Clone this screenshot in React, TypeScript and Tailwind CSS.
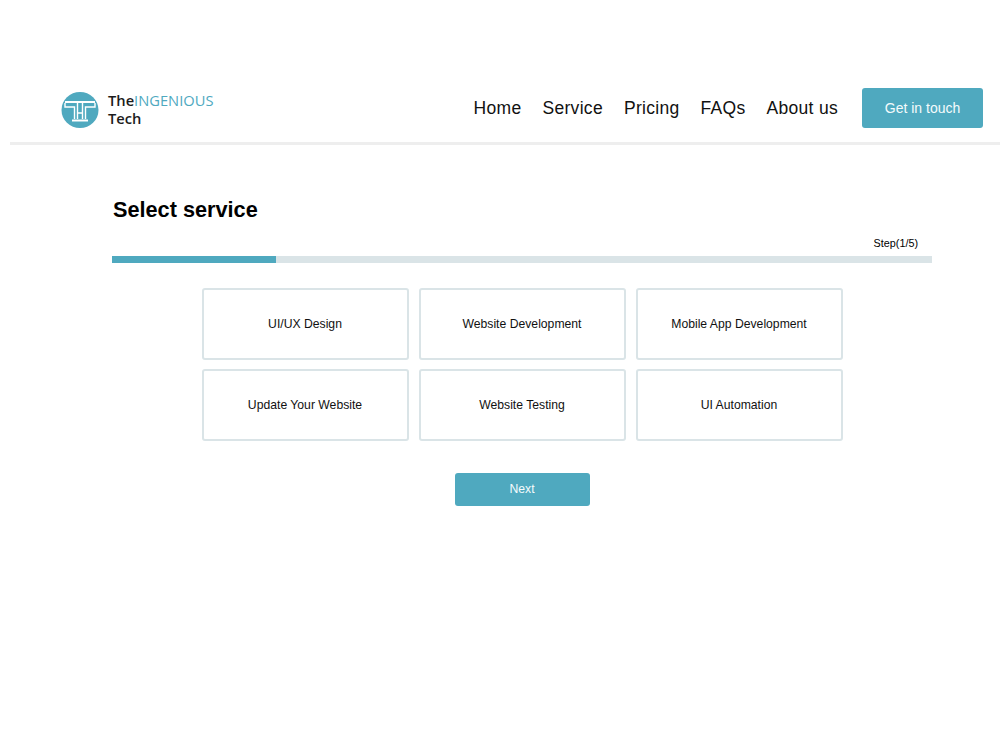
export default function App() {
  const services = ["UI/UX Design", "Website Development", "Mobile App Development", "Update Your Website", "Website Testing", "UI Automation"];
  const nav = ["Home", "Service", "Pricing", "FAQs", "About us"];
  return (
    <div className="w-[1000px] h-[750px] overflow-hidden bg-white text-black font-['Liberation_Sans',Arial,sans-serif]">
      <header className="ml-[10px] h-[145px] pt-[88px] pl-[51px] pr-[17px] flex items-start justify-between border-b-[3px] border-[#eeeeee]">
        <div className="flex items-start gap-[9px] mt-[4px]">
          <svg width="38" height="36" viewBox="0 0 38 36" aria-hidden="true">
            <ellipse cx="19" cy="18" rx="18.500" ry="18" fill="#4fa9bf" />
            <path d="M4 9H34V11H4Z" fill="#ffffff" />
            <path d="M4 11V15H13.500V27M34 11V15H24.500V27" fill="none" stroke="#ffffff" strokeWidth="1.400" />
            <path d="M16.500 11V27M21.500 11V27M16.500 21H21.500" fill="none" stroke="#ffffff" strokeWidth="1.400" />
            <path d="M11 27.500H27V29.500H11Z" fill="#ffffff" />
          </svg>
          <div className="-mt-[1px] font-['Open_Sans',sans-serif] text-[14.700px] leading-[18px] font-semibold text-[#1c1c1c]">
            <div>The<span className="text-[#4fa9bf] font-normal">INGENIOUS</span></div>
            <div>Tech</div>
          </div>
        </div>
        <div className="flex items-center h-[40px]">
          <nav className="flex gap-[21px] text-[17.500px] leading-[41px] tracking-[0.3px] text-[#111111]">
            {nav.map((n) => <span key={n}>{n}</span>)}
          </nav>
          <button className="ml-[24px] w-[121px] h-[40px] rounded-[3px] bg-[#4fa9bf] text-[#f4fbfc] text-[14px]">Get in touch</button>
        </div>
      </header>
      <main className="pl-[112px] pt-[51px] w-[932px]">
        <h1 className="pl-[1px] text-[21.700px] leading-[28px] font-bold">Select service</h1>
        <div className="mt-[12px] pr-[14px] text-right text-[10.800px] leading-[14px]">Step(1/5)</div>
        <div className="mt-[6px] h-[7px] bg-[#dae4e7]">
          <div className="h-full w-[164px] bg-[#4fa9bf]" />
        </div>
        <div className="mt-[25px] mx-auto w-[641px] grid grid-cols-3 gap-x-[10px] gap-y-[9px]">
          {services.map((s) => (
            <div key={s} className="h-[72px] rounded-[3px] border-2 border-[#dae4e7] flex items-center justify-center text-[12.200px] text-[#111111]">{s}</div>
          ))}
        </div>
        <div className="mt-[32px] flex justify-center">
          <button className="w-[135px] h-[33px] rounded-[3px] bg-[#4fa9bf] text-[#f4fbfc] text-[12.200px]">Next</button>
        </div>
      </main>
    </div>
  );
}
